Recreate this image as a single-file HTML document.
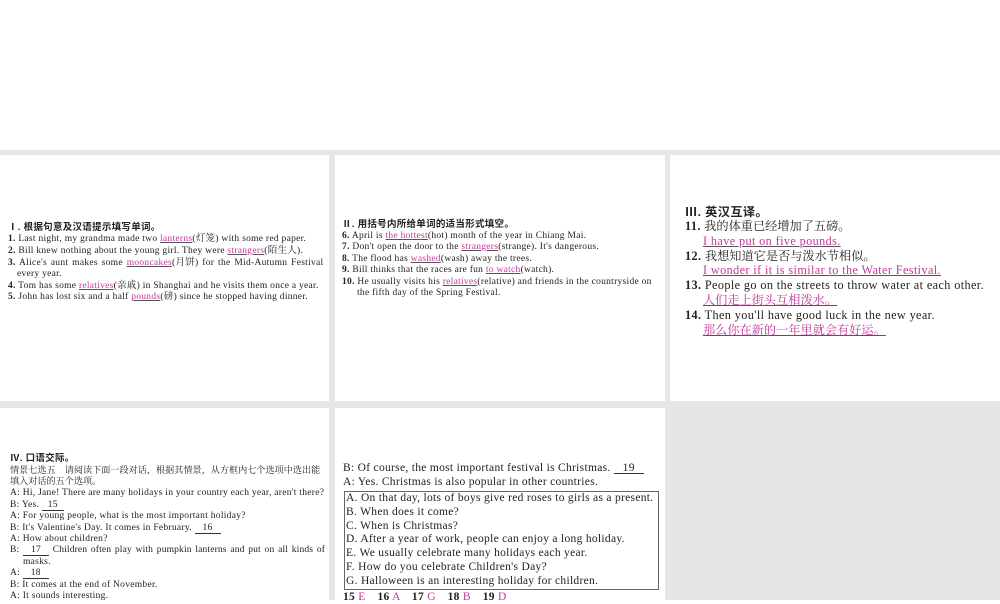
<!DOCTYPE html>
<html><head><meta charset="utf-8"><style>
body{margin:0;width:1000px;height:600px;position:relative;overflow:hidden;background:#fff;font-family:"Liberation Serif","Noto Serif CJK SC",serif;color:#222}
.g{position:absolute;background:#e6e6e6}
.p{position:absolute;background:#fff}
.l{position:absolute;white-space:nowrap}
.p1 .l,.p2 .l,.p4 .l{font-size:9.5px;line-height:11px;letter-spacing:0.28px}
.p3 .l{font-size:12.2px;line-height:14px;letter-spacing:0.4px}
.p5 .l{font-size:11.5px;line-height:13px;letter-spacing:0.3px}
b{font-weight:bold}
.h{font-family:"Liberation Sans","Noto Sans CJK SC",sans-serif;font-weight:bold}
.u{color:#c2389c;text-decoration:underline;text-decoration-color:#555}
.k{color:#c2389c}
.bl{display:inline-block;border-bottom:1px solid #333;text-align:center;line-height:0.9}
.cn{letter-spacing:0 !important}
</style></head><body>
<div class="g" style="left:0;top:150px;width:1000px;height:450px"></div>
<div class="p" style="left:0;top:155px;width:329px;height:246px"></div>
<div class="p" style="left:335px;top:155px;width:330px;height:246px"></div>
<div class="p" style="left:670px;top:155px;width:330px;height:246px"></div>
<div class="p" style="left:0;top:408px;width:329px;height:192px"></div>
<div class="p" style="left:335px;top:408px;width:330px;height:192px"></div>

<div class="p1">
<div class="l h" style="left:8px;top:222px">Ⅰ. 根据句意及汉语提示填写单词。</div>
<div class="l" style="left:8px;top:234px"><b>1.</b> Last night, my grandma made two <span class="u">lanterns</span>(灯笼) with some red paper.</div>
<div class="l" style="left:8px;top:246px"><b>2.</b> Bill knew nothing about the young girl. They were <span class="u">strangers</span>(陌生人).</div>
<div class="l" style="left:8px;top:258px;word-spacing:1.2px"><b>3.</b> Alice's aunt makes some <span class="u">mooncakes</span>(月饼) for the Mid-Autumn Festival</div>
<div class="l" style="left:17px;top:269px">every year.</div>
<div class="l" style="left:8px;top:281px"><b>4.</b> Tom has some <span class="u">relatives</span>(亲戚) in Shanghai and he visits them once a year.</div>
<div class="l" style="left:8px;top:292px"><b>5.</b> John has lost six and a half <span class="u">pounds</span>(磅) since he stopped having dinner.</div>
</div>

<div class="p2">
<div class="l h" style="left:342px;top:219px">Ⅱ. 用括号内所给单词的适当形式填空。</div>
<div class="l" style="left:342px;top:231px"><b>6.</b> April is <span class="u">the hottest</span>(hot) month of the year in Chiang Mai.</div>
<div class="l" style="left:342px;top:242px"><b>7.</b> Don't open the door to the <span class="u">strangers</span>(strange). It's dangerous.</div>
<div class="l" style="left:342px;top:254px"><b>8.</b> The flood has <span class="u">washed</span>(wash) away the trees.</div>
<div class="l" style="left:342px;top:265px"><b>9.</b> Bill thinks that the races are fun <span class="u">to watch</span>(watch).</div>
<div class="l" style="left:342px;top:277px"><b>10.</b> He usually visits his <span class="u">relatives</span>(relative) and friends in the countryside on</div>
<div class="l" style="left:357px;top:288px">the fifth day of the Spring Festival.</div>
</div>

<div class="p3">
<div class="l h" style="left:685px;top:205px">Ⅲ. 英汉互译。</div>
<div class="l" style="left:685px;top:219px"><b>11.</b> <span class="cn">我的体重已经增加了五磅。</span></div>
<div class="l u" style="left:703px;top:234px">I have put on five pounds.</div>
<div class="l" style="left:685px;top:249px"><b>12.</b> <span class="cn">我想知道它是否与泼水节相似。</span></div>
<div class="l u" style="left:703px;top:263px">I wonder if it is similar to the Water Festival.</div>
<div class="l" style="left:685px;top:278px"><b>13.</b> People go on the streets to throw water at each other.</div>
<div class="l u cn" style="left:703px;top:293px">人们走上街头互相泼水。</div>
<div class="l" style="left:685px;top:308px"><b>14.</b> Then you'll have good luck in the new year.</div>
<div class="l u cn" style="left:703px;top:323px">那么你在新的一年里就会有好运。</div>
</div>

<div class="p4">
<div class="l h" style="left:10px;top:453px">Ⅳ. 口语交际。</div>
<div class="l cn" style="left:10px;top:465px;font-size:9.15px">情景七选五　请阅读下面一段对话，根据其情景，从方框内七个选项中选出能</div>
<div class="l cn" style="left:10px;top:476px;font-size:9.15px">填入对话的五个选项。</div>
<div class="l" style="left:10px;top:488px">A: Hi, Jane! There are many holidays in your country each year, aren't there?</div>
<div class="l" style="left:10px;top:500px">B: Yes. <span class="bl" style="width:22px">15</span></div>
<div class="l" style="left:10px;top:511px">A: For young people, what is the most important holiday?</div>
<div class="l" style="left:10px;top:523px">B: It's Valentine's Day. It comes in February. <span class="bl" style="width:26px">16</span></div>
<div class="l" style="left:10px;top:534px">A: How about children?</div>
<div class="l" style="left:10px;top:545px;letter-spacing:0.15px;word-spacing:1.2px">B: <span class="bl" style="width:26px">17</span> Children often play with pumpkin lanterns and put on all kinds of</div>
<div class="l" style="left:23px;top:557px">masks.</div>
<div class="l" style="left:10px;top:568px">A: <span class="bl" style="width:26px">18</span></div>
<div class="l" style="left:10px;top:580px">B: It comes at the end of November.</div>
<div class="l" style="left:10px;top:591px">A: It sounds interesting.</div>
</div>

<div class="p5">
<div class="l" style="left:343px;top:462px">B: Of course, the most important festival is Christmas. <span class="bl" style="width:30px">19</span></div>
<div class="l" style="left:343px;top:476px">A: Yes. Christmas is also popular in other countries.</div>
<div style="position:absolute;left:344px;top:491px;width:313px;height:97px;border:1px solid #666"></div>
<div class="l" style="left:346px;top:492px">A. On that day, lots of boys give red roses to girls as a present.</div>
<div class="l" style="left:346px;top:506px">B. When does it come?</div>
<div class="l" style="left:346px;top:520px">C. When is Christmas?</div>
<div class="l" style="left:346px;top:533px">D. After a year of work, people can enjoy a long holiday.</div>
<div class="l" style="left:346px;top:547px">E. We usually celebrate many holidays each year.</div>
<div class="l" style="left:346px;top:561px">F. How do you celebrate Children's Day?</div>
<div class="l" style="left:346px;top:575px">G. Halloween is an interesting holiday for children.</div>
<div class="l" style="left:343px;top:591px"><b>15</b> <span class="k">E</span>　<b>16</b> <span class="k">A</span>　<b>17</b> <span class="k">G</span>　<b>18</b> <span class="k">B</span>　<b>19</b> <span class="k">D</span></div>
</div>
</body></html>
